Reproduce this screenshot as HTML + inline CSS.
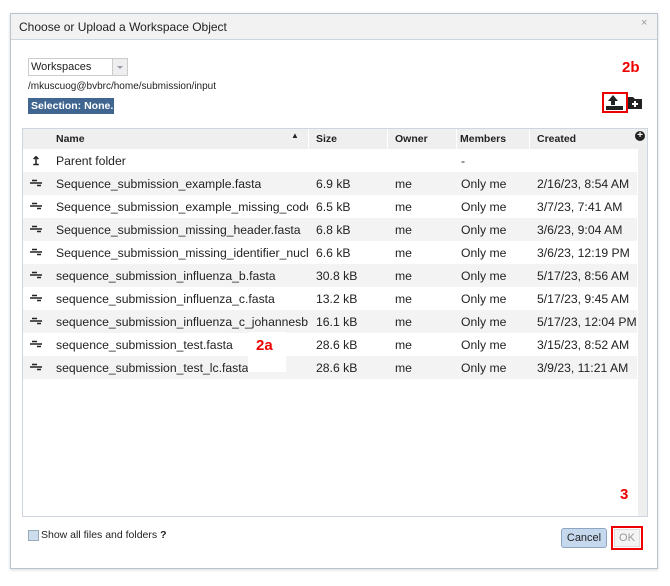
<!DOCTYPE html>
<html><head><style>
*{margin:0;padding:0;box-sizing:border-box}
body{width:670px;height:586px;background:#fff;position:relative;font-family:"Liberation Sans",Arial,sans-serif;overflow:hidden}
.a{position:absolute}
.dlg{left:10px;top:13px;width:648px;height:556px;border:1px solid #b8c4d0;background:#fff;box-shadow:0 1px 3px rgba(0,0,0,.15)}
.title{left:11px;top:14px;width:646px;height:26px;background:#f2f2f2;border-bottom:1px solid #cdd5dd;font-size:12px;color:#222;padding:6px 0 0 8px}
.row{position:absolute;left:23px;width:614px;height:23px;font-size:12.2px;color:#222}
.row span{position:absolute;top:5px;white-space:nowrap;overflow:hidden}
.row svg{position:absolute;left:7px;top:7px}
.g{background:#f3f3f3}
.red{color:#e00;font-weight:bold;font-size:15px}
</style></head><body>
<div class="a dlg"></div>
<div class="a title">Choose or Upload a Workspace Object</div>
<div class="a" style="left:641px;top:17px;font-size:11px;color:#999">×</div>

<div class="a" style="left:28px;top:58px;width:100px;height:18px;border:1px solid #ccc;font-size:11px;padding:2px 0 0 2px;color:#222">Workspaces</div>
<div class="a" style="left:112px;top:59px;width:15px;height:16px;background:#eee;border-left:1px solid #ccc"></div>
<div class="a" style="left:117px;top:66px;border:3px solid transparent;border-top-color:#99a"></div>
<div class="a" style="left:28px;top:81px;font-size:10px;color:#222">/mkuscuog@bvbrc/home/submission/input</div>
<div class="a" style="left:28px;top:98px;width:86px;height:16px;background:#3f6590;color:#fff;font-size:10.5px;font-weight:bold;padding:2px 0 0 3px;white-space:nowrap">Selection: None.</div>

<div class="a red" style="left:622px;top:59px">2b</div>
<div class="a" style="left:602px;top:92px;width:26px;height:21px;border:2px solid #e00"></div>
<svg class="a" style="left:605px;top:94px" width="20" height="17"><path d="M8 1L3 7h3v4h4V7h3z" fill="#222"/><rect x="1" y="12" width="17" height="4" fill="#222"/></svg>
<svg class="a" style="left:628px;top:96px" width="14" height="13"><path d="M0 1h5l2 2h7v10H0z" fill="#222"/><path d="M7 5v6M4 8h6" stroke="#fff" stroke-width="2"/></svg>

<div class="a" style="left:22px;top:128px;width:626px;height:389px;border:1px solid #cfd5dc;background:#fff"></div>
<div class="a" style="left:638px;top:149px;width:9px;height:367px;background:#eee"></div>
<div class="a" style="left:23px;top:129px;width:624px;height:20px;background:#efefef;font-size:10.5px;font-weight:bold;color:#222">
<span class="a" style="left:33px;top:4px">Name</span>
<span class="a" style="left:268px;top:2px;font-size:8px">▲</span>
<span class="a" style="left:285px;top:0;width:1px;height:20px;background:#fff"></span>
<span class="a" style="left:293px;top:4px">Size</span>
<span class="a" style="left:364px;top:0;width:1px;height:20px;background:#fff"></span>
<span class="a" style="left:372px;top:4px">Owner</span>
<span class="a" style="left:433px;top:0;width:1px;height:20px;background:#fff"></span>
<span class="a" style="left:437px;top:4px">Members</span>
<span class="a" style="left:506px;top:0;width:1px;height:20px;background:#fff"></span>
<span class="a" style="left:514px;top:4px">Created</span>
<span class="a" style="left:612px;top:2px;width:10px;height:10px;border-radius:50%;background:#222;color:#fff;font-size:10px;line-height:9px;text-align:center">+</span>
</div>

<div class="row" style="top:149px"><span style="left:8px;font-weight:bold">↥</span><span style="left:33px">Parent folder</span><span style="left:438px">-</span></div>
<div class="row g" style="top:172px"><svg width="12" height="8"><path d="M2 1.5h5M0 4h12M7 6.5h4" stroke="#222" stroke-width="1.5"/></svg><span style="left:33px">Sequence_submission_example.fasta</span><span style="left:293px">6.9 kB</span><span style="left:372px">me</span><span style="left:438px">Only me</span><span style="left:514px">2/16/23, 8:54 AM</span></div>
<div class="row" style="top:195px"><svg width="12" height="8"><path d="M2 1.5h5M0 4h12M7 6.5h4" stroke="#222" stroke-width="1.5"/></svg><span style="left:33px;width:252px">Sequence_submission_example_missing_code</span><span style="left:293px">6.5 kB</span><span style="left:372px">me</span><span style="left:438px">Only me</span><span style="left:514px">3/7/23, 7:41 AM</span></div>
<div class="row g" style="top:218px"><svg width="12" height="8"><path d="M2 1.5h5M0 4h12M7 6.5h4" stroke="#222" stroke-width="1.5"/></svg><span style="left:33px;width:252px">Sequence_submission_missing_header.fasta</span><span style="left:293px">6.8 kB</span><span style="left:372px">me</span><span style="left:438px">Only me</span><span style="left:514px">3/6/23, 9:04 AM</span></div>
<div class="row" style="top:241px"><svg width="12" height="8"><path d="M2 1.5h5M0 4h12M7 6.5h4" stroke="#222" stroke-width="1.5"/></svg><span style="left:33px;width:252px">Sequence_submission_missing_identifier_nucl</span><span style="left:293px">6.6 kB</span><span style="left:372px">me</span><span style="left:438px">Only me</span><span style="left:514px">3/6/23, 12:19 PM</span></div>
<div class="row g" style="top:264px"><svg width="12" height="8"><path d="M2 1.5h5M0 4h12M7 6.5h4" stroke="#222" stroke-width="1.5"/></svg><span style="left:33px">sequence_submission_influenza_b.fasta</span><span style="left:293px">30.8 kB</span><span style="left:372px">me</span><span style="left:438px">Only me</span><span style="left:514px">5/17/23, 8:56 AM</span></div>
<div class="row" style="top:287px"><svg width="12" height="8"><path d="M2 1.5h5M0 4h12M7 6.5h4" stroke="#222" stroke-width="1.5"/></svg><span style="left:33px">sequence_submission_influenza_c.fasta</span><span style="left:293px">13.2 kB</span><span style="left:372px">me</span><span style="left:438px">Only me</span><span style="left:514px">5/17/23, 9:45 AM</span></div>
<div class="row g" style="top:310px"><svg width="12" height="8"><path d="M2 1.5h5M0 4h12M7 6.5h4" stroke="#222" stroke-width="1.5"/></svg><span style="left:33px;width:252px">sequence_submission_influenza_c_johannesburg</span><span style="left:293px">16.1 kB</span><span style="left:372px">me</span><span style="left:438px">Only me</span><span style="left:514px">5/17/23, 12:04 PM</span></div>
<div class="row" style="top:333px"><svg width="12" height="8"><path d="M2 1.5h5M0 4h12M7 6.5h4" stroke="#222" stroke-width="1.5"/></svg><span style="left:33px">sequence_submission_test.fasta</span><span style="left:293px">28.6 kB</span><span style="left:372px">me</span><span style="left:438px">Only me</span><span style="left:514px">3/15/23, 8:52 AM</span></div>
<div class="row g" style="top:356px"><svg width="12" height="8"><path d="M2 1.5h5M0 4h12M7 6.5h4" stroke="#222" stroke-width="1.5"/></svg><span style="left:33px">sequence_submission_test_lc.fasta</span><span style="left:293px">28.6 kB</span><span style="left:372px">me</span><span style="left:438px">Only me</span><span style="left:514px">3/9/23, 11:21 AM</span></div>
<div class="a" style="left:248px;top:332px;width:38px;height:40px;background:#fff"></div>
<div class="a red" style="left:256px;top:337px">2a</div>

<div class="a red" style="left:620px;top:486px">3</div>
<div class="a" style="left:28px;top:530px;width:11px;height:11px;border:1px solid #9ab;background:#cde"></div>
<div class="a" style="left:41px;top:529px;font-size:10.5px;color:#222">Show all files and folders <b>?</b></div>
<div class="a" style="left:561px;top:528px;width:46px;height:20px;border:1px solid #8fa6c0;border-radius:3px;background:#c5d8ee;font-size:11px;text-align:center;padding-top:3px;color:#222">Cancel</div>
<div class="a" style="left:611px;top:526px;width:32px;height:24px;border:2px solid #e00"></div>
<div class="a" style="left:614px;top:529px;width:26px;height:18px;border:1px solid #ddd;background:#f3f3f3;font-size:11px;color:#999;text-align:center;padding-top:2px">OK</div>
</body></html>
